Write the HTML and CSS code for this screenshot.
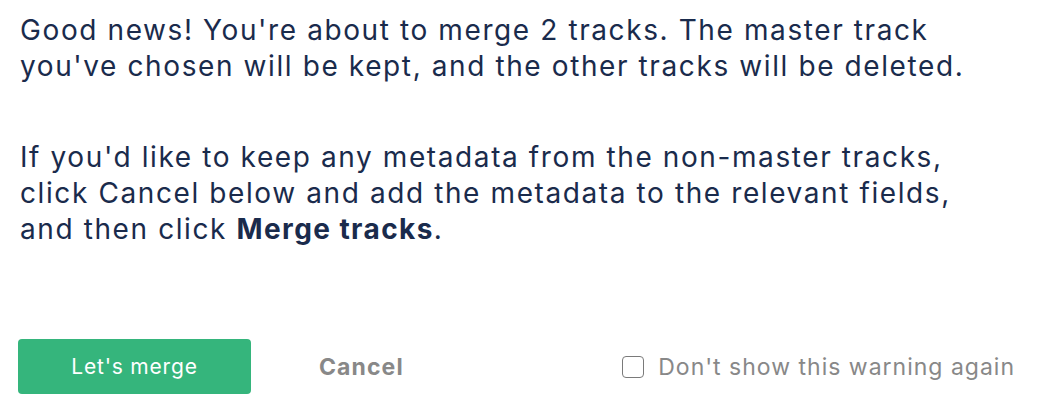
FILE: index.html
```html
<!DOCTYPE html>
<html>
<head>
<meta charset="utf-8">
<link rel="stylesheet" href="styles.css">
</head>
<body>
<div class="dialog">
  <p class="text">Good news! You're about to merge 2 tracks. The master track<br>you've chosen will be kept, and the other tracks will be deleted.</p>
  <p class="text">If you'd like to keep any metadata from the non-master tracks,<br>click Cancel below and add the metadata to the relevant fields,<br>and then click <strong>Merge tracks</strong>.</p>
  <div class="actions">
    <button class="btn-primary">Let's merge</button>
    <button class="btn-cancel">Cancel</button>
    <label class="check">
      <span class="box"></span>
      <span class="check-label">Don't show this warning again</span>
    </label>
  </div>
</div>
</body>
</html>
```
FILE: styles.css
```css
html, body {
  margin: 0;
  padding: 0;
  background: #ffffff;
}
body {
  font-family: "Inter", "Open Sans", sans-serif;
  color: #1a2b4c;
}
.dialog {
  padding: 12px 26px 0 20px;
  width: 1041px;
  box-sizing: border-box;
}
.text {
  margin: 0 0 55px 0;
  font-size: 28px;
  line-height: 36px;
  letter-spacing: 1.6px;
}
.text strong {
  font-weight: 700;
  letter-spacing: 1.4px;
}
.actions {
  display: flex;
  align-items: center;
  padding-top: 37px;
  margin-left: -2px;
}
.btn-primary {
  width: 233px;
  height: 55px;
  background: #35b57c;
  color: #ffffff;
  border: none;
  border-radius: 4px;
  font-family: inherit;
  font-size: 21px;
  letter-spacing: 0.8px;
  padding: 0;
}
.btn-cancel {
  background: none;
  border: none;
  padding: 0;
  margin-left: 68px;
  font-family: inherit;
  font-size: 23px;
  letter-spacing: 1.1px;
  font-weight: 700;
  color: #888888;
}
.check {
  margin-left: auto;
  display: flex;
  align-items: center;
  gap: 14px;
}
.box {
  width: 22px;
  height: 22px;
  box-sizing: border-box;
  border: 1.5px solid #7a7a7a;
  border-radius: 4px;
}
.check-label {
  font-size: 23px;
  letter-spacing: 1px;
  color: #888888;
}
```
